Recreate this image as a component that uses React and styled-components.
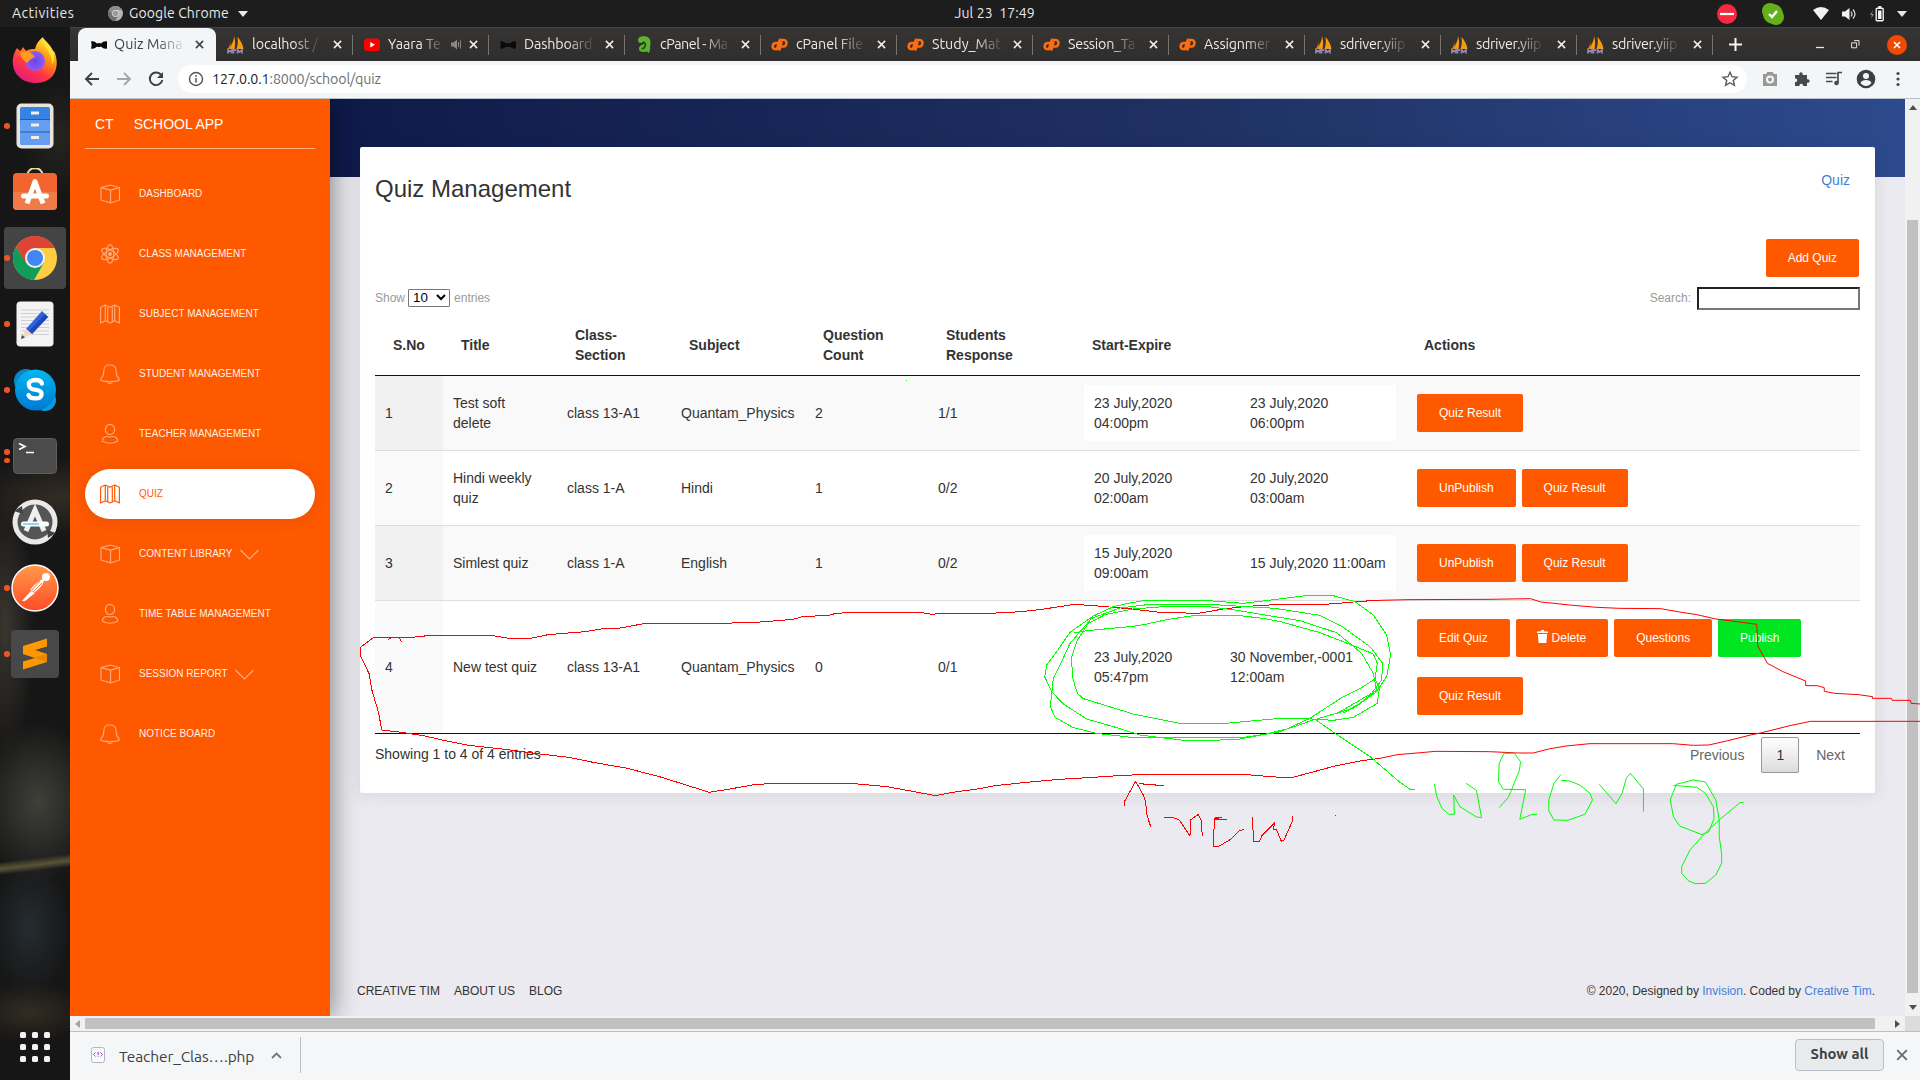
import React from "react";
import styled, { createGlobalStyle } from "styled-components";

const Global = createGlobalStyle`
  *, *::before, *::after { box-sizing: border-box; }
  body { margin: 0; overflow: hidden; font-family: "Liberation Sans", Arial, sans-serif; color: #333; }
  svg { display: block; flex: none; }
`;
const shellFont = `"Ubuntu", "Noto Sans", sans-serif`;

const Desktop = styled.div`
  position: relative; width: 1920px; height: 1080px; overflow: hidden;
  display: grid; grid-template: 27px 1053px / 70px 1850px; background: #161616;
`;

/* ---------- system bar ---------- */
const TopBar = styled.header`
  grid-column: 1 / 3; display: grid; grid-template-columns: 1fr auto 1fr; align-items: center;
  background: #1d1d1d; color: #e8e8e8; font: 14px/27px ${shellFont}; padding: 0 13px 0 12px;
`;
const TopGroup = styled.div`
  display: flex; align-items: center; justify-content: ${p => (p.$end ? "flex-end" : "flex-start")};
`;
const TopText = styled.span`
  width: ${p => p.$w}px; margin: 0 ${p => p.$mr || 0}px 0 ${p => p.$ml || 0}px; white-space: pre;
  letter-spacing: ${p => p.$ls || 0}px;
`;
const Clock = styled.span`white-space: pre; letter-spacing: 0.1px; margin-left: 73px; width: 83px;`;
const TrayItem = styled.span`display: flex; margin-left: ${p => p.$ml}px;`;

/* ---------- dock ---------- */
const DockBar = styled.nav`
  display: flex; flex-direction: column; align-items: center; padding: 2px 0 16px;
  background:
    linear-gradient(173deg, transparent 829px, #3d3829 832px, #5a5238 836px, transparent 842px),
    radial-gradient(ellipse 60px 80px at 38px 775px, #3f4039 0, rgba(50,50,46,.6) 60%, transparent 100%),
    radial-gradient(ellipse 40px 70px at 30px 900px, #252c30, transparent),
    radial-gradient(ellipse 30px 130px at 5px 600px, #3a362f, transparent),
    radial-gradient(ellipse 90px 40px at 60px 470px, #332c25, transparent),
    radial-gradient(ellipse 60px 30px at 30px 985px, #332c22, transparent),
    radial-gradient(ellipse 40px 60px at 60px 110px, #252420, transparent),
    #161616;
`;
const DockItem = styled.div`
  position: relative; width: 62px; height: 62px; margin-bottom: 4px; border-radius: 4px;
  display: flex; align-items: center; justify-content: center;
  background: ${p => (p.$active ? "rgba(255,255,255,.2)" : "transparent")};
`;
const Dots = styled.div`
  position: absolute; left: 0; top: 0; height: 100%; display: flex; flex-direction: column; justify-content: center; gap: 3px;
`;
const Dot = styled.i`width: 5.5px; height: 5.5px; border-radius: 50%; background: #ee5522;`;
const Launcher = styled.div`
  margin-top: auto; display: grid; grid-template-columns: repeat(3, 6px); gap: 6px; padding-bottom: 2px;
`;
const LauncherDot = styled.i`width: 6px; height: 6px; border-radius: 1.5px; background: #f2f2f2;`;

/* ---------- browser ---------- */
const Browser = styled.section`
  display: grid; grid-template-rows: 34px 38px 932px 49px; min-width: 0; background: #f4f5f7;
`;
const TabStrip = styled.div`
  display: flex; background: linear-gradient(#373533, #2f2d2d); border-top: 1px solid #46443f; padding-left: 8px;
`;
const TabBox = styled.div`
  width: ${p => (p.$active ? 138 : 136)}px; height: 33px; display: flex; align-items: center;
  padding-left: ${p => (p.$active ? 12 : 11)}px; position: relative;
  font: 14.3px/33px ${shellFont};
  color: ${p => (p.$active ? "#3c4043" : "#eceae8")};
  background: ${p => (p.$active ? "#f4f5f7" : "transparent")};
  border-radius: 8px 8px 0 0;
  &::after {
    content: ""; position: absolute; right: -1px; top: 7px; height: 20px; width: 1px;
    background: ${p => (p.$active ? "transparent" : "#777573")};
  }
`;
const FaviconSlot = styled.span`width: 17px; display: flex; justify-content: center;`;
const TabTitle = styled.span`
  margin-left: ${p => (p.$active ? 7 : 8)}px; white-space: nowrap; letter-spacing: ${p => p.$ls || 0}px;
  mask-image: linear-gradient(to right, #000 62%, rgba(0,0,0,.12) 100%);
`;
const TabClose = styled.span`margin-left: auto; margin-right: ${p => (p.$active ? 12 : 10)}px;`;
const Speaker = styled.span`margin-left: auto; margin-right: -3px;`;
const NewTab = styled.div`width: 46px; display: flex; align-items: center; justify-content: center;`;
const WindowControls = styled.div`margin-left: auto; margin-right: 13px; display: flex; align-items: center; gap: 27px;`;

const Toolbar = styled.div`
  display: flex; align-items: center; padding: 0 12px 2px 12px; border-bottom: 1px solid #b9c2c9; background: #f4f5f7;
`;
const NavButtons = styled.div`display: flex; gap: 12px; width: 96px;`;
const Omnibox = styled.div`
  flex: 1; height: 28px; border-radius: 14px; background: #fff; display: flex; align-items: center; padding: 0 8px 0 9px;
  font: 14.2px/28px ${shellFont}; color: #6b6f73; letter-spacing: -0.11px;
`;
const Url = styled.span`flex: 1; margin-left: 7px;`;
const Host = styled.span`color: #202124;`;
const Extensions = styled.div`display: flex; gap: 12px; margin-left: 13px;`;

const Viewport = styled.div`
  display: grid; grid-template: 917px 15px / 1835px 15px; background: #f1f1f1;
`;
const Page = styled.div`display: flex; background: #ebeaf0; overflow: hidden;`;
const VBar = styled.div`
  display: flex; flex-direction: column; align-items: center; padding: 6px 0; background: #f1f1f1;
`;
const VThumb = styled.div`width: 11px; height: 773px; flex: none; background: #c1c1c1; margin: 110px 0 auto;`;
const HBar = styled.div`display: flex; align-items: center; background: #f1f1f1; padding: 0 5px;`;
const HThumb = styled.div`width: 1790px; height: 11px; background: #c1c1c1; margin: 0 auto 0 5px;`;
const Corner = styled.div`background: #dcdcdc;`;
const Triangle = styled.i`
  width: 0; height: 0; border: 4px solid transparent; flex: none;
  ${p => ({
    up: "border-bottom: 5px solid #505050; border-top: 0;",
    down: "border-top: 5px solid #505050; border-bottom: 0;",
    left: "border-right: 5px solid #a3a3a3; border-left: 0;",
    right: "border-left: 5px solid #505050; border-right: 0;",
  }[p.$dir])}
`;

/* ---------- sidebar ---------- */
const Sidebar = styled.aside`
  width: 260px; flex: none; background: #ff5900; color: #fff; padding: 0 15px; position: relative; z-index: 1;
  box-shadow: 0 2px 22px 0 rgba(0,0,0,.2), 0 2px 30px 0 rgba(0,0,0,.35);
`;
const Brand = styled.div`
  display: flex; gap: 20px; padding: 15px 10px 0; height: 50px; font-size: 14px; line-height: 20px;
  border-bottom: 1px solid rgba(255,255,255,.5);
`;
const Menu = styled.div`display: flex; flex-direction: column; gap: 10px; padding-top: 20px;`;
const MenuItem = styled.div`
  height: 50px; border-radius: 26px; display: flex; align-items: center; padding-left: 15px;
  font-size: 10px; line-height: 30px; background: ${p => (p.$active ? "#fff" : "transparent")};
  color: ${p => (p.$active ? "#ff5900" : "rgba(255,255,255,.93)")};
  box-shadow: ${p => (p.$active ? "0 1px 15px 1px rgba(39,39,39,.1)" : "none")};
`;
const MenuIcon = styled.span`margin-right: 19px; opacity: ${p => (p.$active ? 1 : 0.5)};`;
const MenuLabel = styled.span`margin-top: -1px;`;
const Caret = styled.span`opacity: .5; margin-left: 7px;`;

/* ---------- main panel ---------- */
const Main = styled.main`flex: 1; display: flex; flex-direction: column; min-width: 0;`;
const Banner = styled.div`height: 78px; flex: none; background: linear-gradient(to right, #0f1a4a, #1f3162 55%, #2d4a8e);`;
const Card = styled.section`
  margin: -30px 30px 0; height: 646px; padding: 0 15px; background: #fff; border-radius: 2px; position: relative;
  box-shadow: 0 1px 15px 1px rgba(39,39,39,.1);
`;
const CardHead = styled.div`display: flex; justify-content: space-between; height: 92px; padding: 23px 10px 0 0;`;
const Title = styled.h1`margin: 1px 0 0; font-weight: 400; font-size: 24px; line-height: 35px;`;
const Link = styled.a`color: #3f7fd8; font-size: ${p => p.$size || 12}px; line-height: 20px;`;
const ButtonRow = styled.div`display: flex; justify-content: flex-end; padding-right: 1px;`;
const Button = styled.button`
  height: 38px; padding: 0 22px; border: 0; border-radius: 2px; color: #fff; font: 12px/16px "Liberation Sans", Arial, sans-serif;
  background: ${p => (p.$green ? "#00e722" : "#ff5900")}; margin: ${p => (p.$inline ? "10px 1px" : 0)};
  vertical-align: middle; white-space: nowrap;
`;
const TrashWrap = styled.span`display: inline-block; vertical-align: -1px; margin: 0 4px 0 -1px;`;
const Controls = styled.div`
  display: flex; justify-content: space-between; align-items: center; height: 23px; margin-top: 10px; color: #9a9a9a; font-size: 12px;
`;
const Length = styled.label`display: flex; align-items: center; gap: 4px; padding-bottom: 2px;`;
const SelectBox = styled.span`
  width: 42px; height: 18px; border: 1px solid #767676; border-radius: 1px; background: #fff; color: #000; font-size: 13.33px; line-height: 16px;
  display: flex; align-items: center; justify-content: space-between; padding: 0 3px 0 4px; margin-left: -1px;
`;
const Search = styled.label`display: flex; align-items: center; gap: 6px;`;
const SearchText = styled.span`padding-bottom: 2px;`;
const SearchInput = styled.input`
  width: 163px; height: 23px; margin: 0; border: 2px solid; border-color: #222 #767676 #767676 #222; background: #fff; padding: 1px 2px;
`;
const Table = styled.table`
  width: 1485px; margin-top: 5px; table-layout: fixed; border-spacing: 0; font-size: 14px; line-height: 20px;
  border-bottom: 1px solid #111;
`;
const Th = styled.th`
  width: ${p => p.$w}px; height: 61px; padding: 10px 18px; text-align: left; font-weight: 700; border-bottom: 1px solid #111;
`;
const Tr = styled.tr`
  background: ${p => (p.$odd ? "#f9f9f9" : "#fff")};
  & > td:first-child { background: ${p => (p.$odd ? "#f1f1f1" : "#fafafa")}; }
  &:not(:first-child) > td { border-top: 1px solid #ddd; }
`;
const Td = styled.td`padding: 8px 10px; vertical-align: middle;`;
const Period = styled.div`
  display: grid; grid-template-columns: ${p => p.$cols}; align-items: center; width: 312px; padding: 8px 0 8px 10px; background: #fff;
`;
const Stamp = styled.span`white-space: pre-line;`;
const TableFoot = styled.div`display: flex; justify-content: space-between; align-items: flex-start; font-size: 14px; line-height: 20px; padding-top: 3px;`;
const Info = styled.span`padding-top: 7px;`;
const Pager = styled.div`display: flex; gap: 2px; color: #666;`;
const PageButton = styled.span`
  padding: 7px 14px; border: 1px solid ${p => (p.$current ? "#979797" : "transparent")}; border-radius: 2px;
  color: ${p => (p.$current ? "#333" : "#666")};
  background: ${p => (p.$current ? "linear-gradient(#fff, #dcdcdc)" : "none")};
`;
const Footer = styled.footer`
  margin-top: auto; display: flex; justify-content: space-between; padding: 0 30px 15px 27px; font-size: 12px; line-height: 20px;
`;
const FooterLinks = styled.div`display: flex; gap: 14px;`;

/* ---------- downloads ---------- */
const Downloads = styled.div`
  display: flex; align-items: center; border-top: 1px solid #b9bfc8; background: #f4f6f8; padding: 0 12px 2px 21px;
  font: 15.5px/30px ${shellFont}; color: #3c4043;
`;
const FileName = styled.span`width: 152px; margin: 3px 0 0 14px; letter-spacing: -0.1px;`;
const Divider = styled.i`width: 1px; height: 36px; background: #b9bfc8; margin-left: 18px;`;
const ShowAll = styled.button`
  margin: 0 12px 0 auto; width: 89px; height: 32px; border: 1px solid #b9bfc8; border-radius: 4px; background: #e8eaec;
  color: #3c4043; font: 600 14.8px/28px ${shellFont}; padding: 0 0 2px;
`;

const Ink = styled.svg`position: absolute; left: 0; top: 0; width: 1920px; height: 1080px; pointer-events: none; z-index: 5;`;
const Stroke = styled.path`vector-effect: non-scaling-stroke;`;

/* ---------- icons ---------- */
const Svg = ({ w = 20, h = w, vb, children, ...r }) => (
  <svg width={w} height={h} viewBox={vb || `0 0 ${w} ${h}`} fill="none" {...r}>{children}</svg>
);
const Cross = ({ s = 9, c = "#eee", sw = 1.7 }) => (
  <Svg w={s} vb="0 0 10 10"><path d="M1 1l8 8M9 1l-8 8" stroke={c} strokeWidth={sw} /></Svg>
);
const menuShapes = {
  box: <path d="M1 3.7L10.500 1l9 2.700v12.300L10.500 19 1 16zM1 3.700l9.500 2.500 9-2.500M10.500 6.200V19" />,
  atom: <g><ellipse cx="10" cy="10" rx="3.800" ry="9.300" /><ellipse cx="10" cy="10" rx="3.800" ry="9.300" transform="rotate(60 10 10)" /><ellipse cx="10" cy="10" rx="3.800" ry="9.300" transform="rotate(120 10 10)" /><circle cx="10" cy="10" r="1.400" fill="currentColor" /></g>,
  map: <path d="M.6 3.300L5.300 1 10 3.300 14.700 1l4.700 2.300V19l-4.700-2.300L10 19l-4.700-2.300L.6 19zM5.300 1v15.700M7.700 3v14.500M12.300 3v14.500M14.700 1v15.700" />,
  bell: <path d="M10 .7c-4 0-6.200 2.800-6.200 6.300 0 4.500-.8 5.800-2.500 7.200-1 .9-.6 2.300 1 2.600 4.500.8 10.900.8 15.400 0 1.600-.3 2-1.700 1-2.600-1.700-1.400-2.500-2.700-2.500-7.200 0-3.500-2.200-6.300-6.200-6.300zM7.700 17.500c.3 1.300 1.200 2 2.300 2s2-.7 2.300-2" />,
  user: <g><ellipse cx="10" cy="5.500" rx="4.600" ry="5" /><path d="M2.300 17.300c0-3 2.200-5 5-4.800 1.800.6 3.600.6 5.400 0 2.800-.2 5 1.800 5 4.800-4.500 2.300-10.900 2.300-15.400 0z" /></g>,
};
const MenuGlyph = ({ name }) => <Svg w={20} stroke="currentColor" strokeWidth="1.200" strokeLinejoin="round">{menuShapes[name]}</Svg>;

const Favicon = ({ kind }) => {
  if (kind === "bow") return <Svg w={16}><path d="M0 4.500c2-.5 4 0 6 2 1-.7 3-.7 4 0 2-2 4-2.500 6-2v7c-2 .5-4 0-6-2-1 .7-3 .7-4 0-2 2-4 2.500-6 2 .8-2 .8-5 0-7z" fill="#0a0a0a" /></Svg>;
  if (kind === "pma") return <Svg w={17} h={18} vb="0 0 17 18"><path d="M7 0c1.500 4 1.500 9 .5 13H2c2-3 5-8 5-13zM10.500 1c3 3 5.500 8 6 12H9.500c1.500-4 1.500-8 1-12z" fill="#f59b13" /><path d="M3 3.500c.5 3 0 7-2.500 9.500h3.500z" fill="#d98a1c" /><path d="M1 17.500v-3.500l2 1.500L5 14v3.500M6.500 17.500v-3.500h2.500M10.500 17.500v-3.500l2 2 2.500-2v3.500" stroke="#8a86bd" strokeWidth="1.800" /></Svg>;
  if (kind === "yt") return <Svg w={16}><rect y="1.500" width="16" height="12.500" rx="3.500" fill="#f00" /><path d="M6.300 5v5.500L11 7.800z" fill="#fff" /></Svg>;
  if (kind === "az") return <Svg w={16} h={18} vb="0 0 16 18"><path d="M3 1.500c4-2 11-2 11.500 4.500l-.7 8.500c-.2 1.500-1 2.500-1.500 2.500l-1-1.500c-4 1-8.300.5-8.300-2.500 0-3.500 3-4 5.500-5.500 1-.7.700-2-.5-2-1.500 0-2 1.500-4 1.500-2 0-2.500-4-1-5.500z" fill="#5cb531" /><path d="M9.500 7c0 4-1.500 6-4 5.500" stroke="#1c4d12" strokeWidth="1.600" /></Svg>;
  return <Svg w={17} h={16} vb="0 0 17 16"><g stroke="#ff6c0c" strokeWidth="2.600"><path d="M7.500 6H5C1 6 .5 12 4 12h2L8.800 3h4c4 0 3 6.500 0 6.500h-2.500M10.600 4.500L8.300 13.500" /></g></Svg>;
};

const TrashIcon = () => (
  <TrashWrap><Svg w={11} h={13}><path d="M0 1.500h3.500L4.300 0h2.400l.8 1.500H11V3H0zM.9 4h9.200l-.7 9H1.600z" fill="#fff" /></Svg></TrashWrap>
);

const ChromeLogo = ({ r = 22, mono }) => (
  <Svg w={r * 2} vb="0 0 44 44">
    <circle cx="22" cy="22" r="22" fill={mono ? "#b5b5b5" : "#ffcd41"} />
    <path d="M22 12h19.600a22 22 0 0 0-38.700-1l9.500 16z" fill={mono ? "#8b8b8b" : "#dd4437"} />
    <path d="M2.900 11A22 22 0 0 0 21 44l9.800-17H13z" fill={mono ? "#6f6f6f" : "#109d58"} />
    <circle cx="22" cy="22" r="10" fill={mono ? "#ddd" : "#f1f1f1"} /><circle cx="22" cy="22" r="8" fill={mono ? "#999" : "#4285f4"} />
  </Svg>
);

const dockItems = [
  { icon: <Svg w={46} h={48}>
    <defs>
      <linearGradient id="fx" x1=".8" y1="0" x2=".2" y2="1"><stop stopColor="#fff44f" /><stop offset=".35" stopColor="#ff980e" /><stop offset=".65" stopColor="#ff3647" /><stop offset="1" stopColor="#e31587" /></linearGradient>
      <radialGradient id="fxg"><stop stopColor="#6a47e6" /><stop offset="1" stopColor="#9059ff" /></radialGradient>
    </defs>
    <path d="M5 12l3 3c1-1 2-2 3-4l3 4c3-2 7-2 9-2 1-5 4-9 8-12 1 6 6 9 9 15l2-1c6 12 3 32-18 32S-5 27 5 12z" fill="url(#fx)" />
    <circle cx="23" cy="25" r="10" fill="url(#fxg)" /><path d="M8 17c6-3 12-1 15 4-3 1-6 3-8 6-3-2-6-5-7-10z" fill="#ff9a1f" />
    <path d="M31 2c0 10 10 14 9 27 6-12-1-19-9-27z" fill="#ffe13d" />
  </Svg> },
  { dots: 1, icon: <Svg w={38} h={46}>
    <rect x=".5" y=".5" width="37" height="45" rx="5" fill="#e9e5dd" /><rect x="4" y="4" width="30" height="38" rx="2" fill="#3584e4" /><rect x="4" y="17" width="30" height="25" rx="2" fill="#659ef0" />
    <path d="M4 16.500h30M4 29h30" stroke="#1a5fb4" /><path d="M15 10h8M15 22h8M15 34.500h8" stroke="#f0efeb" strokeWidth="3" />
  </Svg> },
  { icon: <Svg w={46} h={48}>
    <path d="M15.500 7c0-9 15-9 15 0" stroke="#f2d9a8" strokeWidth="2" /><rect x="1" y="5" width="44" height="37" rx="4" fill="#f26430" /><path d="M1 24h44v14q0 4-4 4H5q-4 0-4-4z" fill="#f07a48" />
    <path d="M15 35.500l8-22 8 22" stroke="#fff" strokeWidth="5" strokeLinejoin="round" /><rect x="9" y="25.500" width="28" height="5" rx="2.500" fill="#fff" />
  </Svg> },
  { dots: 1, active: true, icon: <ChromeLogo /> },
  { dots: 1, icon: <Svg w={38} h={46}>
    <rect x=".5" y=".5" width="37" height="45" rx="4" fill="#f3f3f3" />
    <path d="M5 9h28M5 12.500h28M5 16h28M5 19.500h28M5 23h28M5 26.500h28M5 30h28M5 33.500h28" stroke="#cfcfcf" />
    <path d="M26 10l6 6-16 17-6-5z" fill="#2f62e0" /><path d="M32 16l-3-3-16 17 3 3z" fill="#1d49b8" /><path d="M10 28l6 5-11 5z" fill="#f6d7b4" /><path d="M5 38l1-4 3 2.500z" fill="#444" />
  </Svg> },
  { dots: 1, icon: <Svg w={44} h={44}>
    <defs><linearGradient id="sk" x2="0" y2="1"><stop stopColor="#00b7f0" /><stop offset="1" stopColor="#0078d4" /></linearGradient></defs>
    <circle cx="13" cy="13" r="12" fill="#0b87c9" /><circle cx="32" cy="32" r="11" fill="#0a9ce2" /><circle cx="22.500" cy="22" r="20.500" fill="url(#sk)" />
    <path d="M29 15.500c-1-3-4-3.500-6.500-3.500-9 0-8.500 8.500-1 9.700 4.500.8 7.500 1.300 7 5-.6 5-11.500 4.800-13 .3" stroke="#fff" strokeWidth="4.300" strokeLinecap="round" />
  </Svg> },
  { dots: 2, icon: <Svg w={44} h={36}>
    <rect x=".5" y=".5" width="43" height="35" rx="4" fill="#4b4b4b" stroke="#5f5f5f" /><path d="M6 5.500l6 3-6 3M13 14.500h8" stroke="#fff" strokeWidth="1.700" />
  </Svg> },
  { icon: <Svg w={46} h={46}>
    <circle cx="23" cy="23" r="20" fill="#555" stroke="#e9e9e9" strokeWidth="5" /><path d="M2 12l9 3-1-8M44 34l-9-3 1 8" fill="#444" />
    <path d="M14 32l9-21 9 21" stroke="#efefef" strokeWidth="5" /><rect x="9" y="22.500" width="28" height="5" rx="2.500" fill="#fff" /><path d="M11 25h16" stroke="#1caee8" />
  </Svg> },
  { dots: 1, icon: <Svg w={48} h={48}>
    <defs><linearGradient id="pm" x2="0" y2="1"><stop stopColor="#ff9a4a" /><stop offset="1" stopColor="#ff4b28" /></linearGradient></defs>
    <circle cx="24" cy="24" r="23" fill="url(#pm)" stroke="#fff" strokeWidth="1.500" /><circle cx="35" cy="13" r="4" fill="#fff" />
    <path d="M32 15c-5 2-9 6-13 11l5 2c4-3 7-6 9-11zM20 27l-9 10 3 0 10-8z" fill="#fff" /><path d="M29 17l-8 9M31 19l-8 8" stroke="#ff7038" />
  </Svg> },
  { dots: 1, icon: <Svg w={48} h={48}>
    <rect width="48" height="48" rx="4" fill="#484848" /><path d="M12 16l24-7.500v8L24 20l12 4v8L12 39.500v-8L24 28l-12-4z" fill="#ff9800" /><path d="M22 27.400l14-3.400v8z" fill="#e88708" />
  </Svg> },
];

const tabs = [
  ["bow", "Quiz Mana", 0.1], ["pma", "localhost /", -0.1], ["yt", "Yaara Te", -0.1], ["bow", "Dashboard", -0.15], ["az", "cPanel - Ma", -0.45],
  ["cp", "cPanel File", -0.1], ["cp", "Study_Mat"], ["cp", "Session_Ta", -0.25], ["cp", "Assignmer", -0.15], ["pma", "sdriver.yiip", -0.3],
  ["pma", "sdriver.yiip", -0.3], ["pma", "sdriver.yiip", -0.3],
];

const menu = [
  ["box", "DASHBOARD"], ["atom", "CLASS MANAGEMENT"], ["map", "SUBJECT MANAGEMENT"], ["bell", "STUDENT MANAGEMENT"],
  ["user", "TEACHER MANAGEMENT"], ["map", "QUIZ"], ["box", "CONTENT LIBRARY", true], ["user", "TIME TABLE MANAGEMENT"],
  ["box", "SESSION REPORT", true], ["bell", "NOTICE BOARD"],
];

const columns = [
  ["S.No", 68], ["Title", 114], ["Class-\nSection", 114], ["Subject", 134], ["Question\nCount", 123],
  ["Students\nResponse", 146], ["Start-Expire", 332], ["Actions", 454],
];
const rows = [
  [1, "Test soft delete", "class 13-A1", "Quantam_Physics", 2, "1/1", "23 July,2020\n04:00pm", "23 July,2020\n06:00pm", ["Quiz Result"]],
  [2, "Hindi weekly quiz", "class 1-A", "Hindi", 1, "0/2", "20 July,2020\n02:00am", "20 July,2020\n03:00am", ["UnPublish", "Quiz Result"]],
  [3, "Simlest quiz", "class 1-A", "English", 1, "0/2", "15 July,2020\n09:00am", "15 July,2020 11:00am", ["UnPublish", "Quiz Result"]],
  [4, "New test quiz", "class 13-A1", "Quantam_Physics", 0, "0/1", "23 July,2020\n05:47pm", "30 November,-0001\n12:00am", ["Edit Quiz", "Delete", "Questions", "Publish", "Quiz Result"]],
];

function SystemBar() {
  return (
    <TopBar>
      <TopGroup>
        <TopText $w={64} $mr={32} $ls={0.5}>Activities</TopText>
        <ChromeLogo r={7.5} mono />
        <TopText $w={105} $ml={6} $mr={4} $ls={0.12}>Google Chrome</TopText>
        <Svg w={10} h={6}><path d="M0 0h10L5 6z" fill="#e8e8e8" /></Svg>
      </TopGroup>
      <Clock>Jul 23  17:49</Clock>
      <TopGroup $end>
        <Svg w={20}><circle cx="10" cy="10" r="10" fill="#f52a3f" /><path d="M3 10h14" stroke="#fff" strokeWidth="2.200" /></Svg>
        <TrayItem $ml={25}><Svg w={22}><circle cx="8" cy="8" r="8" fill="#64b019" /><circle cx="14" cy="14" r="8" fill="#64b019" /><circle cx="11" cy="11" r="10" fill="#64b019" /><path d="M7 11l3 3 5-6" stroke="#fff" strokeWidth="2.400" /></Svg></TrayItem>
        <TrayItem $ml={29}><Svg w={16} h={13}><path d="M0 3q8-6 16 0L8 13z" fill="#f2f2f2" /></Svg></TrayItem>
        <TrayItem $ml={13}><Svg w={15} h={14}><path d="M0 4.500h3L7.500 1v12L3 9.500H0z" fill="#f2f2f2" /><path d="M9 4.500q2 2.500 0 5M11 2.500q4 4.500 0 9" stroke="#ddd" strokeWidth="1.200" /></Svg></TrayItem>
        <TrayItem $ml={13}><Svg w={15} h={16}><path d="M3 4L0 9h2l-1 4 3-5H2z" fill="#888" /><rect x="6.200" y="2.200" width="7" height="12.600" rx="1" stroke="#f2f2f2" strokeWidth="1.400" /><path d="M8.300 0h3v2h-3zM8 4.500h3.500v8.500H8z" fill="#f2f2f2" /></Svg></TrayItem>
        <TrayItem $ml={12}><Svg w={10} h={6}><path d="M0 0h10L5 6z" fill="#e8e8e8" /></Svg></TrayItem>
      </TopGroup>
    </TopBar>
  );
}

function Dock() {
  return (
    <DockBar>
      {dockItems.map((it, i) => (
        <DockItem key={i} $active={it.active}>
          {it.dots && <Dots>{Array.from({ length: it.dots }, (_, k) => <Dot key={k} />)}</Dots>}
          {it.icon}
        </DockItem>
      ))}
      <Launcher>{Array.from({ length: 9 }, (_, k) => <LauncherDot key={k} />)}</Launcher>
    </DockBar>
  );
}

function Tabs() {
  return (
    <TabStrip>
      {tabs.map(([kind, title, ls], i) => (
        <TabBox key={i} $active={i === 0}>
          <FaviconSlot><Favicon kind={kind} /></FaviconSlot>
          <TabTitle $ls={ls} $active={i === 0}>{title}</TabTitle>
          {kind === "yt" && <Speaker><Svg w={11} h={11}><path d="M0 3.500h2.500L6 .5v10L2.500 7.500H0z" fill="#8a8886" /><path d="M7.500 3v5M9.500 1.500v8" stroke="#8a8886" /></Svg></Speaker>}
          <TabClose $active={i === 0}><Cross c={i === 0 ? "#3c4043" : "#f0eeec"} /></TabClose>
        </TabBox>
      ))}
      <NewTab><Svg w={13}><path d="M6.500 0v13M0 6.500h13" stroke="#f5f5f5" strokeWidth="2" /></Svg></NewTab>
      <WindowControls>
        <Svg w={8} h={8}><path d="M0 6.500h8" stroke="#e5e5e5" strokeWidth="1.300" /></Svg>
        <Svg w={9} h={9}><path d="M.6 2.800h5v5h-5zM3 .6h5v5" stroke="#e5e5e5" /></Svg>
        <Svg w={20}><circle cx="10" cy="10" r="10" fill="#f04b05" /><path d="M7 7l6 6M13 7l-6 6" stroke="#fff" strokeWidth="1.500" /></Svg>
      </WindowControls>
    </TabStrip>
  );
}

function AddressBar() {
  return (
    <Toolbar>
      <NavButtons>
        <Svg w={20}><path d="M17 10H4M10 4l-6 6 6 6" stroke="#3c4043" strokeWidth="1.900" /></Svg>
        <Svg w={20}><path d="M3 10h13M10 4l6 6-6 6" stroke="#a5a7a9" strokeWidth="1.900" /></Svg>
        <Svg w={20}><path d="M15.500 6.500A6.300 6.300 0 1 0 16.300 11" stroke="#3c4043" strokeWidth="1.900" /><path d="M17 3v6h-6z" fill="#3c4043" /></Svg>
      </NavButtons>
      <Omnibox>
        <Svg w={18}><circle cx="9" cy="9" r="6.500" stroke="#50545a" strokeWidth="1.400" /><path d="M9 8v4.500M9 5v1.700" stroke="#50545a" strokeWidth="1.500" /></Svg>
        <Url><Host>127.0.0.1</Host>:8000/school/quiz</Url>
        <Svg w={18}><path d="M9 2.200l2 4.500 5 .5-3.700 3.200 1.100 4.900L9 12.700l-4.400 2.600 1.100-4.900L2 7.200l5-.5z" stroke="#55585c" strokeWidth="1.400" /></Svg>
      </Omnibox>
      <Extensions>
        <Svg w={20}><path d="M3 5h3l1.300-2h5.400L14 5h3v12H3z" fill="#999" /><circle cx="10" cy="10.500" r="4" fill="#f4f5f7" /><circle cx="10" cy="10.500" r="2" fill="#999" /></Svg>
        <Svg w={20}><path d="M3 6h4.300c-.8-3.700 4.200-3.700 3.400 0H15v4.300c3.500-.7 3.500 4.100 0 3.400V17h-4c.5-3-4-3-3.500 0H3v-4c3 .5 3-4 0-3.500z" fill="#46494d" /></Svg>
        <Svg w={20}><path d="M2 4.500h10.500M2 8.500h10.500M2 12.500h6.500M14 14V3.500h4" stroke="#46494d" strokeWidth="1.700" /><circle cx="12.500" cy="14" r="2.300" fill="#46494d" /></Svg>
        <Svg w={20}><circle cx="10" cy="10" r="9.300" fill="#3c4043" /><circle cx="10" cy="7" r="3" fill="#f4f5f7" /><path d="M4.500 14c1-4 10-4 11 0-3 4-8 4-11 0z" fill="#f4f5f7" /></Svg>
        <Svg w={20}><circle cx="10" cy="4.500" r="1.600" fill="#46494d" /><circle cx="10" cy="10" r="1.600" fill="#46494d" /><circle cx="10" cy="15.500" r="1.600" fill="#46494d" /></Svg>
      </Extensions>
    </Toolbar>
  );
}

function SideMenu() {
  return (
    <Sidebar>
      <Brand><span>CT</span><span>SCHOOL APP</span></Brand>
      <Menu>
        {menu.map(([icon, label, caret]) => {
          const active = label === "QUIZ";
          return (
            <MenuItem key={label} $active={active}>
              <MenuIcon $active={active}><MenuGlyph name={icon} /></MenuIcon>
              <MenuLabel>{label}</MenuLabel>
              {caret && <Caret><Svg w={19} h={11}><path d="M.5 1l9 9 9-9" stroke="#fff" strokeWidth="1.200" /></Svg></Caret>}
            </MenuItem>
          );
        })}
      </Menu>
    </Sidebar>
  );
}

function QuizTable() {
  return (
    <Table>
      <thead>
        <tr>{columns.map(([c, w]) => <Th key={c} $w={w}><Stamp>{c}</Stamp></Th>)}</tr>
      </thead>
      <tbody>
        {rows.map(([no, title, cls, subject, count, resp, start, end, actions]) => (
          <Tr key={no} $odd={no % 2 === 1}>
            <Td>{no}</Td><Td>{title}</Td><Td>{cls}</Td><Td>{subject}</Td><Td>{count}</Td><Td>{resp}</Td>
            <Td><Period $cols={no === 4 ? "136px 1fr" : "156px 1fr"}><Stamp>{start}</Stamp><Stamp>{end}</Stamp></Period></Td>
            <Td>
              {actions.map(a => (
                <React.Fragment key={a}>
                  <Button $inline $green={a === "Publish"}>{a === "Delete" && <TrashIcon />}{a}</Button>{" "}
                </React.Fragment>
              ))}
            </Td>
          </Tr>
        ))}
      </tbody>
    </Table>
  );
}

function Annotations() {
  return (
    <Ink fill="none" strokeWidth="1" shapeRendering="crispEdges">
      <g transform="translate(340 540) scale(.40816 .33333)" stroke="#f00">
        <Stroke d="M102 570L95 520 78 450 71 400 50 348V322L83 292H176L215 287H375L414 295H467L510 284 600 275 650 265 688 264 748 250H932L1020 247 1110 238 1133 230 1197 226 1215 220 1262 217H1420L1450 223 1475 220H1568M102 570L150 577 205 587 250 600 310 615 410 629 490 642 560 652 620 667 700 684 780 709 905 757 960 746 1015 734 1065 730H1250L1340 740 1460 767 1500 757 1568 746M118 298L125 294H145L151 305" />
      </g>
      <g transform="translate(960 580) scale(.33333)" stroke="#f00">
        <Stroke d="M60 100H90L185 95 245 88 345 73 415 78 515 87 600 97 715 100 790 87 862 79 960 73 1115 72 1190 65 1235 62 1260 61M60 626L105 617 210 606 300 598 400 592 490 586 565 583H850L920 589 990 594 1040 581 1125 558 1200 543 1260 535" />
        <Stroke d="M493 677V665L527 604 550 645 557 665 560 702 572 740M536 609L560 614 612 616M612 712L640 713 657 719 690 768 691 720 715 703 723 720 727 767M800 718L765 717 785 712 765 714 761 760V799L778 798 815 776 838 752 852 748M878 710L880 784H899L905 768 943 730 941 748 950 750 964 784 972 780 998 722V709M1125 706h4" />
      </g>
      <g transform="translate(1380 580) scale(.34439 .33333)" stroke="#f00">
        <Stroke d="M0 61L84 59 314 58 437 56 467 66 560 76 630 82 695 85 815 86 870 96 920 104 975 117 1030 124 1094 133 1097 198 1125 250 1170 275 1236 303V317H1270L1290 323V334L1320 340 1390 344 1430 350V355H1485L1487 361H1540L1542 370 1568 372M0 535L50 524 130 517 160 514 318 515 400 519H445L490 507 540 498 610 491H850L910 496 955 495 1010 482 1080 464 1105 459 1190 437 1250 424H1568" />
      </g>
      <g transform="translate(960 580) scale(.33333)" stroke="#0f0">
        <Stroke d="M342 159L380 152 520 139 560 132 620 119 705 106H830L910 115 965 126 1080 158 1170 193 1240 222 1252 250 1245 297 1200 326 1140 356 1050 415 980 447 900 466 840 477 760 481H670L540 465 460 440 380 417 310 372 275 335 254 290 260 255 290 215 330 157 400 108 460 80 510 69 550 62H745L850 70 950 58 1045 46 1120 47 1185 65 1240 105 1280 165 1292 225 1280 290 1250 335 1180 385 1060 420 950 458 850 472H640L530 474 410 460 340 443 285 412 271 380 280 295 305 245 330 190 395 115 480 84 570 73H745L945 85 1080 106 1150 142 1230 200 1268 250 1265 300 1235 340 1130 401" />
        <Stroke d="M1148 400L1200 370 1250 330 1240 280 1205 220 1130 158 1020 122 890 101 825 90 745 80H610L520 87 435 104 385 130 352 180 335 230 337 290 352 340 370 356 520 402 670 432H775L950 416H1040L1120 421 1180 412 1252 370 1258 325 1245 295M1068 420L1130 463 1230 530 1320 607 1350 628H1365M-161-598h3" />
      </g>
      <g transform="translate(1380 580) scale(.34439 .33333)" stroke="#0f0">
        <Stroke d="M158 612L165 650 180 685 200 703H216L214 645 232 680 280 711 295 713 280 631 250 610M346 683L373 652 405 570 408 545 390 520H360L346 550 344 605 358 628 423 629 406 718 440 704 456 703M525 584L505 610 490 660V692L505 720 545 721 595 703 617 660 610 640 580 615 550 603 526 601M637 613L685 671 703 640 715 595 727 580 765 627V695M1056 667L1045 668 985 720 945 758 900 810 876 860V880L895 902 915 911 945 910 975 885 992 850V820L985 770V720L975 660 945 606 910 600 860 613 843 660 852 710 870 738 935 764 955 755 970 715 968 680 945 640 920 622 852 616" />
      </g>
    </Ink>
  );
}

export default function App() {
  return (
    <Desktop>
      <Global />
      <SystemBar />
      <Dock />
      <Browser>
        <Tabs />
        <AddressBar />
        <Viewport>
          <Page>
            <SideMenu />
            <Main>
              <Banner />
              <Card>
                <CardHead><Title>Quiz Management</Title><Link $size={14}>Quiz</Link></CardHead>
                <ButtonRow><Button>Add Quiz</Button></ButtonRow>
                <Controls>
                  <Length>Show<SelectBox>10<Svg w={10} h={7}><path d="M1 1l4 4 4-4" stroke="#000" strokeWidth="2" /></Svg></SelectBox>entries</Length>
                  <Search><SearchText>Search:</SearchText><SearchInput aria-label="Search" /></Search>
                </Controls>
                <QuizTable />
                <TableFoot>
                  <Info>Showing 1 to 4 of 4 entries</Info>
                  <Pager><PageButton>Previous</PageButton><PageButton $current>1</PageButton><PageButton>Next</PageButton></Pager>
                </TableFoot>
              </Card>
              <Footer>
                <FooterLinks><span>CREATIVE TIM</span><span>ABOUT US</span><span>BLOG</span></FooterLinks>
                <span>© 2020, Designed by <Link>Invision</Link>. Coded by <Link>Creative Tim</Link>.</span>
              </Footer>
            </Main>
          </Page>
          <VBar><Triangle $dir="up" /><VThumb /><Triangle $dir="down" /></VBar>
          <HBar><Triangle $dir="left" /><HThumb /><Triangle $dir="right" /></HBar>
          <Corner />
        </Viewport>
        <Downloads>
          <Svg w={14} h={16}><rect x=".5" y=".5" width="13" height="15" rx="2" fill="#fafafa" stroke="#b5b5b5" /><path d="M4.500 5.500l-2 2 2 2M9.500 5.500l2 2-2 2M6 6.300q1-1.300 2 0L7 8M7 8.800v1" stroke="#a04be0" /></Svg>
          <FileName>Teacher_Clas….php</FileName>
          <Svg w={11} h={7}><path d="M1 6l4.500-4.500L10 6" stroke="#777" strokeWidth="1.800" /></Svg>
          <Divider />
          <ShowAll>Show all</ShowAll>
          <Cross s={12} c="#6b6b6b" sw={1.5} />
        </Downloads>
      </Browser>
      <Annotations />
    </Desktop>
  );
}
